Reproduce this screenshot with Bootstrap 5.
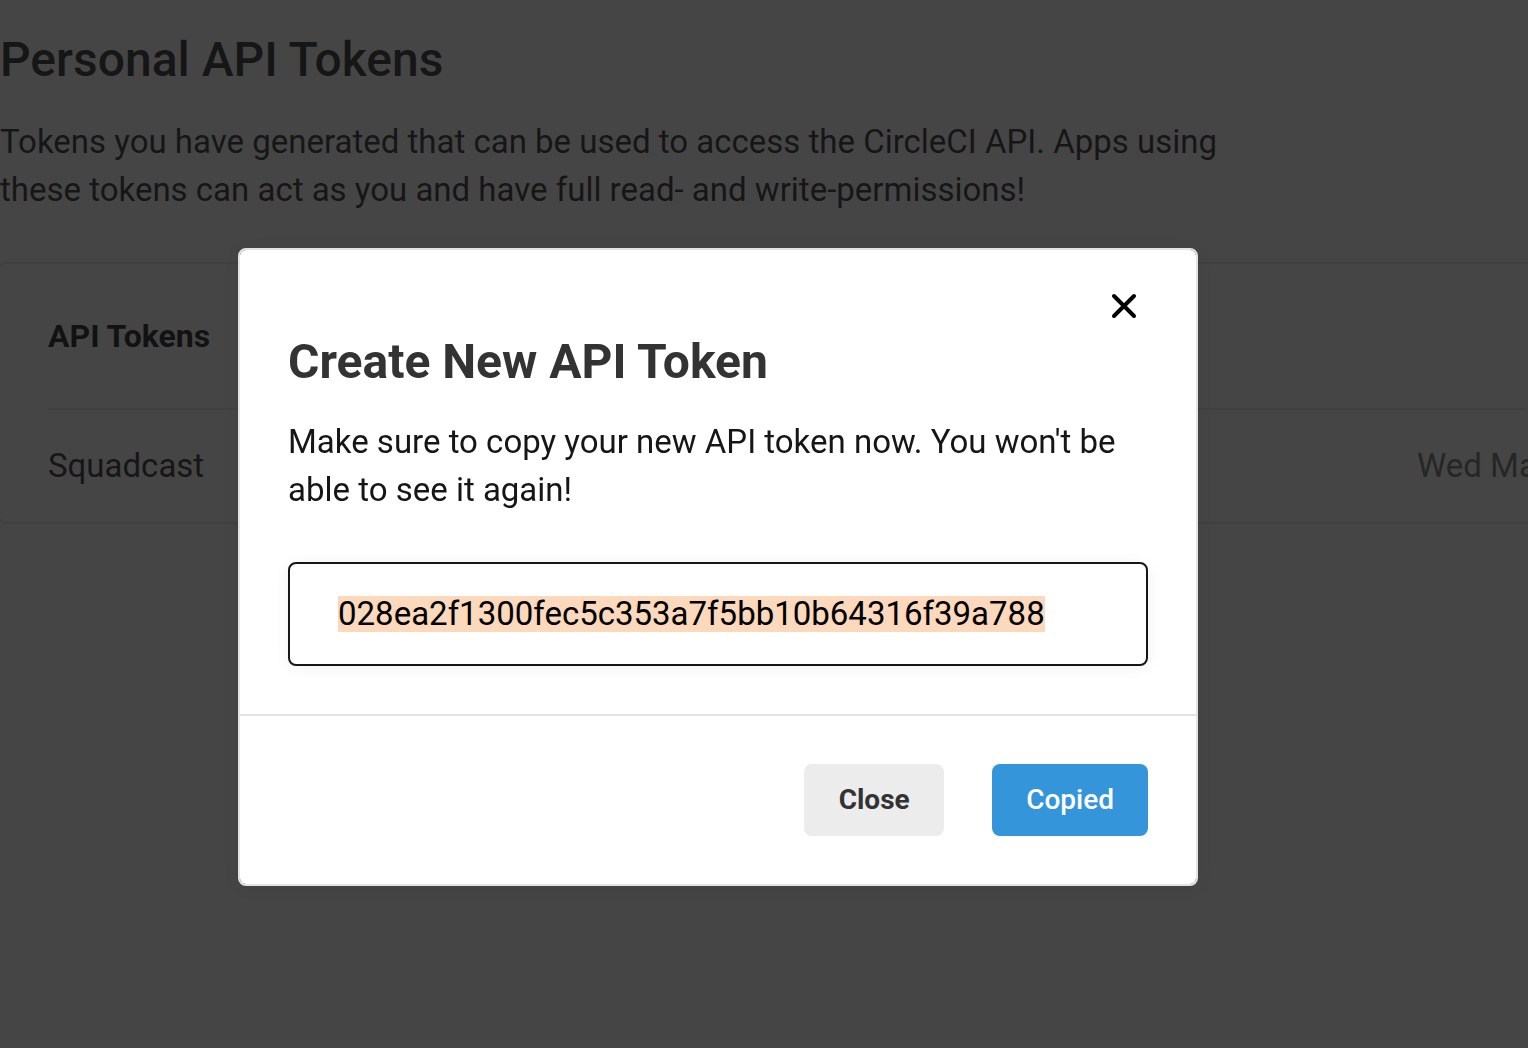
<!DOCTYPE html>
<html lang="en">
<head>
<meta charset="utf-8">
<meta name="viewport" content="width=device-width, initial-scale=1">
<title>Personal API Tokens</title>
<link href="https://cdn.jsdelivr.net/npm/bootstrap@5.3.0/dist/css/bootstrap.min.css" rel="stylesheet">
<style>
  body { font-family: Roboto, "Liberation Sans", sans-serif; font-size: 33px; line-height: 48px; color: #161616; background: #fff; overflow: hidden; }
  .page { padding-top: 32px; }
  .page-title { font-size: 48px; line-height: 56px; font-weight: 500; margin-bottom: 30px; }
  .intro { max-width: 1280px; margin-bottom: 48px; }
  .token-card { border: 2px solid #e3e3e3; border-radius: 8px; margin: 0 -48px 0 -2px; padding: 0 48px; }
  .token-table { --bs-table-color: #161616; --bs-table-bg: transparent; table-layout: fixed; border-color: #e3e3e3; }
  .token-table th, .token-table td { border: 0; }
  .token-table th { padding: 48px 0; font-size: 32px; color: #000; font-weight: 700; border-bottom: 2px solid #e3e3e3; }
  .token-table td { padding: 32px 0; }
  .token-table .date-col { width: 109px; white-space: nowrap; }
  .token-table td.date-col { color: #666; }
  .modal-backdrop.shade { --bs-backdrop-bg: rgb(22, 22, 22); --bs-backdrop-opacity: .8; opacity: .8; }
  .token-modal { padding: 248px 92px 0 0; }
  .token-modal .modal-dialog { max-width: 960px; margin: 0 auto; }
  .token-modal .modal-content { border: 2px solid #e3e3e3; border-radius: 8px; color: #161616; box-shadow: 0 2px 16px rgba(0, 0, 0, .06); }
  .token-modal .modal-header { padding: 40px 56px 0; border: 0; }
  .token-modal .modal-body { padding: 12px 48px 48px; }
  .token-modal .modal-footer { padding: 48px; gap: 48px; border-top: 2px solid #e3e3e3; }
  .token-modal .modal-footer > * { margin: 0; }
  .dismiss { width: 32px; height: 32px; line-height: 0; }
  .modal-title { font-size: 48px; line-height: 56px; font-weight: 700; color: #333; margin-bottom: 28px; }
  .note { margin-bottom: 48px; }
  .token-field { font-size: 33px; line-height: 36px; padding: 32px 48px; border: 2px solid #161616; border-radius: 8px; color: #000; box-shadow: 0 2px 16px rgba(0, 0, 0, .06); }
  .token-field:focus { border-color: #161616; color: #000; box-shadow: 0 2px 16px rgba(0, 0, 0, .06); }
  .token-field::selection { background: #fcd8bc; color: #000; }
  .action { font-size: 28px; line-height: 40px; padding: 16px 34px; min-width: 140px; border: 0; border-radius: 8px; }
  .action-close { --bs-btn-color: #333; --bs-btn-bg: #ececec; --bs-btn-hover-bg: #e0e0e0; font-weight: 700; }
  .action-copy { --bs-btn-color: #fff; --bs-btn-bg: #3595da; --bs-btn-hover-bg: #2c85c6; --bs-btn-hover-color: #fff; font-weight: 500; }
</style>
</head>
<body>
<main class="page">
  <h1 class="page-title">Personal API Tokens</h1>
  <p class="intro">Tokens you have generated that can be used to access the CircleCI API. Apps using<br>these tokens can act as you and have full read- and write-permissions!</p>
  <section class="token-card">
    <table class="table token-table mb-0">
      <thead><tr><th scope="col">API Tokens</th><th class="date-col"></th></tr></thead>
      <tbody><tr><td>Squadcast</td><td class="date-col">Wed Ma</td></tr></tbody>
    </table>
  </section>
</main>

<div class="modal-backdrop shade"></div>
<div class="modal d-block token-modal" role="dialog" aria-modal="true" aria-labelledby="dialogTitle">
  <div class="modal-dialog">
    <div class="modal-content">
      <div class="modal-header justify-content-end">
        <button type="button" class="btn p-0 border-0 dismiss" aria-label="Dismiss">
          <svg width="32" height="32" viewBox="0 0 32 32" fill="none" stroke="#000" stroke-width="4" stroke-linecap="round"><path d="M6 6L26 26M26 6L6 26"/></svg>
        </button>
      </div>
      <div class="modal-body">
        <h2 class="modal-title" id="dialogTitle">Create New API Token</h2>
        <p class="note" id="tokenNote">Make sure to copy your new API token now. You won't be<br>able to see it again!</p>
        <input class="form-control token-field" id="token" type="text" readonly aria-labelledby="tokenNote" value="028ea2f1300fec5c353a7f5bb10b64316f39a788">
      </div>
      <div class="modal-footer justify-content-end">
        <button type="button" class="btn action action-close">Close</button>
        <button type="button" class="btn action action-copy">Copied</button>
      </div>
    </div>
  </div>
</div>
<script src="https://cdn.jsdelivr.net/npm/bootstrap@5.3.0/dist/js/bootstrap.bundle.min.js"></script>
<script>
  const field = document.getElementById('token');
  field.focus();
  field.select();
</script>
</body>
</html>
